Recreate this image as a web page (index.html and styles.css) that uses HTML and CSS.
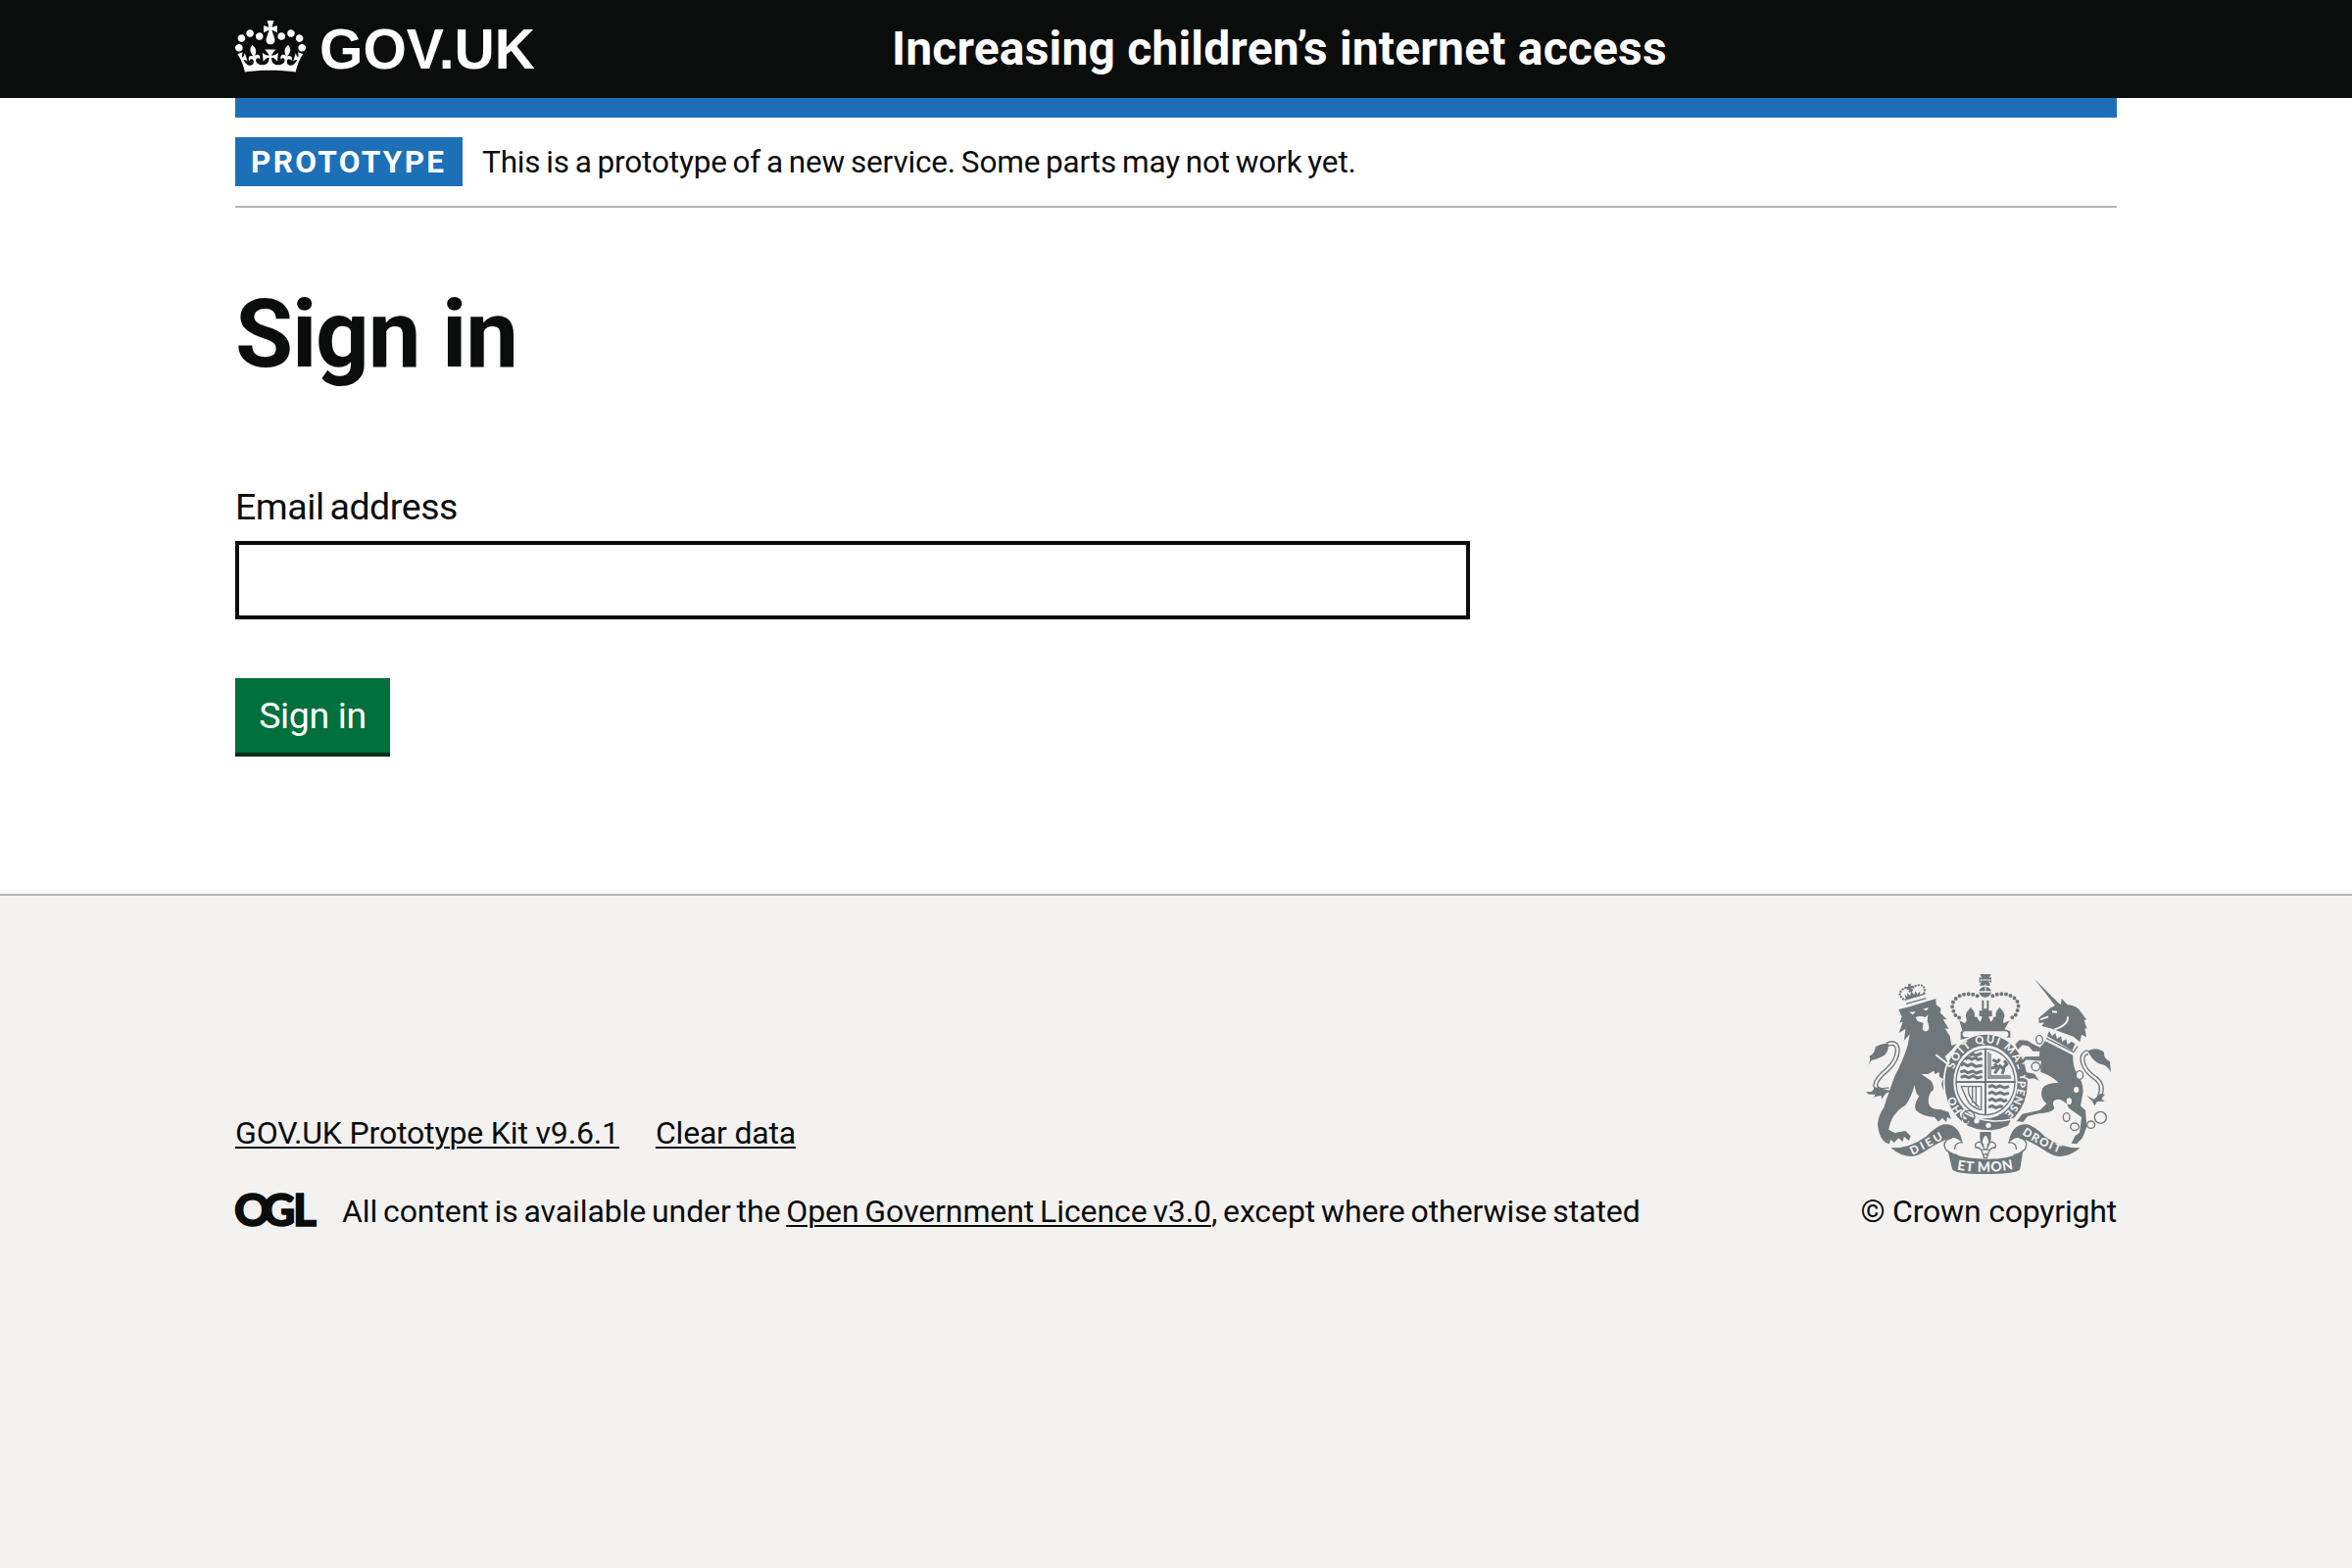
FILE: index.html
```html
<!DOCTYPE html>
<html lang="en">
<head>
<meta charset="utf-8">
<title>Sign in</title>
<link rel="stylesheet" href="styles.css">
</head>
<body>
<header class="header">
  <div class="container header-row">
    <a class="logo" href="#">
      <svg class="crown" viewBox="0 0 132 97" aria-hidden="true"><path fill="currentColor" fill-rule="evenodd" d="M25 30.2c3.5 1.5 7.7-.2 9.1-3.7 1.5-3.6-.2-7.8-3.9-9.2-3.6-1.4-7.6.3-9.1 3.9-1.4 3.5.3 7.5 3.9 9zM9 39.5c3.6 1.5 7.8-.2 9.2-3.7 1.5-3.6-.2-7.8-3.9-9.1-3.6-1.5-7.6.2-9.1 3.8-1.4 3.5.3 7.5 3.8 9zM4.4 57.2c3.5 1.5 7.7-.2 9.1-3.8 1.5-3.6-.2-7.7-3.9-9.1-3.5-1.5-7.6.3-9.1 3.8-1.4 3.5.3 7.6 3.9 9.1zm38.3-21.4c3.5 1.5 7.7-.2 9.1-3.8 1.5-3.6-.2-7.7-3.9-9.1-3.6-1.5-7.6.3-9.1 3.8-1.3 3.6.4 7.7 3.9 9.1zm64.4-5.6c-3.6 1.5-7.8-.2-9.1-3.7-1.5-3.6.2-7.8 3.8-9.2 3.6-1.4 7.7.3 9.2 3.9 1.3 3.5-.4 7.5-3.9 9zm15.9 9.3c-3.6 1.5-7.7-.2-9.1-3.7-1.5-3.6.2-7.8 3.7-9.1 3.6-1.5 7.7.2 9.2 3.8 1.5 3.5-.3 7.5-3.8 9zm4.7 17.7c-3.6 1.5-7.8-.2-9.2-3.8-1.5-3.6.2-7.7 3.9-9.1 3.6-1.5 7.7.3 9.2 3.8 1.3 3.5-.4 7.6-3.9 9.1zM89.3 35.8c-3.6 1.5-7.8-.2-9.2-3.8-1.4-3.6.2-7.7 3.9-9.1 3.6-1.5 7.7.3 9.2 3.8 1.4 3.6-.3 7.7-3.9 9.1zM69.7 17.7l8.9 4.7V9.3l-8.9 2.8c-.2-.3-.5-.6-.9-.9L72.4 0H59.6l3.5 11.2c-.3.3-.6.5-.9.9l-8.8-2.8v13.1l8.8-4.7c.3.3.6.7.9.9l-5 15.4v.1c-.2.8-.4 1.6-.4 2.4 0 4.1 3.1 7.5 7 8.1h.2c.3 0 .7.1 1 .1.4 0 .7 0 1-.1h.2c4-.6 7.1-4.1 7.1-8.1 0-.8-.1-1.7-.4-2.4V34l-5.1-15.4c.4-.2.7-.6 1-.9zM66 92.8c16.9 0 32.8 1.1 47.1 3.2 4-16.9 8.9-26.7 14-33.5l-9.6-3.4c1 4.9 1.1 7.2 0 10.2-1.5-1.4-3-4.3-4.2-8.7L108.6 76c2.8-2 5-3.2 7.5-3.3-4.4 9.4-10 11.9-13.6 11.2-4.3-.8-6.3-4.6-5.6-7.9 1-4.7 5.7-5.9 8-.5 4.3-8.7-3-11.4-7.6-8.8 7.1-7.2 7.9-13.5 2.1-21.1-8 6.1-8.1 12.3-4.5 20.8-4.7-5.4-12.1-2.5-9.5 6.2 3.4-5.2 7.9-2 7.2 3.1-.6 4.3-6.4 7.8-13.5 7.2-10.3-.9-10.9-8-11.2-13.8 2.5-.5 7.1 1.8 11 7.3L80.2 60c-4.1 4.4-8 5.3-12.3 5.4 1.4-4.4 8-11.6 8-11.6H55.5s6.4 7.2 7.9 11.6c-4.2-.1-8-1-12.3-5.4l1.4 16.4c3.9-5.5 8.5-7.7 10.9-7.3-.3 5.8-.9 12.8-11.1 13.8-7.2.6-12.9-2.9-13.5-7.2-.7-5 3.8-8.3 7.1-3.1 2.7-8.7-4.6-11.6-9.4-6.2 3.7-8.5 3.6-14.7-4.6-20.8-5.8 7.6-5 13.9 2.2 21.1-4.7-2.6-11.9.1-7.7 8.8 2.3-5.5 7.1-4.2 8.1.5.7 3.3-1.3 7.1-5.7 7.9-3.5.7-9-1.8-13.5-11.2 2.5.1 4.7 1.3 7.5 3.3l-4.7-15.4c-1.2 4.4-2.7 7.2-4.3 8.7-1.1-3-.9-5.3 0-10.2l-9.5 3.4c5 6.9 9.9 16.7 14 33.5 14.8-2.1 30.8-3.2 47.7-3.2z"/></svg>
      <svg class="wordmark" viewBox="0 0 230 64"><text x="3" y="51" textLength="220" lengthAdjust="spacingAndGlyphs">GOV.UK</text></svg>
    </a>
    <a class="service" href="#">Increasing children’s internet access</a>
  </div>
</header>
<div class="container">
  <div class="blue-bar"></div>
  <div class="phase">
    <strong class="tag">PROTOTYPE</strong>
    <span class="phase-text">This is a prototype of a new service. Some parts may not work yet.</span>
  </div>
  <main class="main">
    <h1 class="title">Sign in</h1>
    <form class="form">
      <label class="label" for="email">Email address</label>
      <input class="input" id="email" type="text">
      <button class="button" type="button">Sign in</button>
    </form>
  </main>
</div>
<footer class="footer">
  <div class="container footer-row">
    <div class="meta">
      <nav class="links">
        <a class="link link-kit" href="#">GOV.UK Prototype Kit v9.6.1</a>
        <a class="link link-clear" href="#">Clear data</a>
      </nav>
      <div class="licence">
        <svg class="ogl" viewBox="0 0 82 36"><text x="-1 28 59" y="33.5">OGL</text></svg>
        <span class="licence-text">All content is available under the <a class="link" href="#">Open Government Licence v3.0</a>, except where otherwise stated</span>
      </div>
    </div>
    <a class="copyright" href="#">
      <svg class="crest" viewBox="66 66 762 624" aria-hidden="true">
        <defs>
          <path id="garter" d="M336 403A104 120 0 0 1 544 403A104 120 0 0 1 440 523"/>
          <path id="pense" d="M438 283A99 118 0 0 1 537 403A99 118 0 0 1 438 521"/>
          <path id="garter-left" d="M374 498A102 119 0 0 1 338 405"/>
          <path id="scroll-left" d="M214 626Q262 604 320 570"/>
          <path id="scroll-right" d="M549 562Q604 598 670 622"/>
          <path id="scroll-mid" d="M350 670Q438 686 526 668"/>
        </defs>
        <!-- lion -->
        <path class="thin" d="M190 151L253 132M195 163L256 146"/>
        <path class="small-pearls" d="M186 148Q168 134 182 121Q197 105 206 125M250 130Q256 104 234 106Q214 107 212 125"/>
        <path d="M201 103l8-2 1 7 7-1 1 7-7 1 3 10-7 2-4-10-6 2-2-7 7-2zM190 132l7 9 3-11 7 9 4-15 8 12 5-13 5 11 9-10-1 15-42 12z"/>
        <path d="M172 180L205 172L286 147L287 165L302 178L299 190L320 211L308 211L326 240L314 238L329 262L334 290L350 286L335 304L314 325L345 384L341 410L346 425L334 414L331 429L320 416L309 428L303 408L309 393L297 386L296 372L283 378L280 368L262 378L242 378L262 392Q280 400 279 425Q260 440 264 468Q270 488 300 486L325 494L333 516L321 510L318 525L306 512L294 524L282 510Q246 508 225 489Q216 476 235 445Q224 440 221 411Q209 455 193 473Q148 500 142 548L160 558L193 552L209 568L204 582L189 570L184 585L172 574L158 588L147 578L144 592Q112 584 108 530Q110 505 127 480Q140 440 160 385Q186 335 200 290L206 256L189 275L193 240L173 252L185 218L175 221L182 202Z"/>
        <path class="cut" d="M204 188l20-1-8 9zM246 180l18-7-6 11zM224 204q14-6 30 0l8-8-2 20q8 20 3 28-11 8-18-3l3-19-18-6z"/>
        <path class="cutline" d="M286 319L326 350Q345 370 348 400"/>
        <path class="tail" d="M136 288Q165 275 169 302Q169 335 137 365Q105 390 101 412Q104 433 143 425"/>
        <path class="tailcut" d="M136 288Q165 275 169 302Q169 335 137 365Q105 390 101 412Q104 433 143 425"/>
        <path d="M72 360Q90 338 83 323Q100 315 101 295Q115 285 140 284Q144 305 129 320Q105 333 90 335ZM72 433L90 432L100 418L150 430Q130 434 121 455L118 443L96 449L101 440L81 440Z"/>
        <!-- royal crown -->
        <path d="M421 72h34l-6 12 7-3v18l-8-6 5 14h-33l6-14-7 6V81l8 4zM418 124a20 19 0 0 1 38 0zM418 128h38q-6 15-19 15t-19-15zM427 152h6v32h-6zM442 152h6v32h-6z"/>
        <path class="cutthin" d="M421 90h34M438 103v24"/>
        <path class="pearls" d="M413 139Q385 126 359 139Q325 158 342 189Q345 205 366 207M460 139Q489 126 517 139Q550 158 533 189Q530 205 510 207"/>
        <path d="M358 214l16 8q9-4 4-20-2-12 15-28 16 16 11 29 10-3 12 9l7 6 5-16-9-1v-17h11l-2-6h20l-2 6h12v17l-10 1 6 16 6-6q2-12 11-10-6-12 10-28 17 16 15 28-6 16-2 20l18-8-20 34q-58-11-124 0z"/>
        <path d="M362 248q18-9 28-9 50-5 98 0 12 1 26 8v20q-76-17-152 6z"/>
        <rect class="cut" x="368" y="247" width="140" height="18" rx="9"/>
        <!-- garter and shield -->
        <ellipse class="halo" cx="440" cy="404" rx="129" ry="149"/>
        <ellipse class="cut" cx="438" cy="402" rx="98" ry="112"/>
        <ellipse class="thin" cx="438" cy="402" rx="90" ry="101"/>
        <path class="bar" d="M438 299V505M347 402H530"/>
        <path class="beasts" d="M376 333l10-6 9 6 13-5 7 6 13-3M390 322l8-6 11 5 18-7M362 352l9-6 13 7 11-6 14 8 19-4M361 372l12-4 11 6 15-5 10 6 19-6M362 388l12-4 13 5 13-6 12 7 16-4M447 418l11-5 12 6 13-5 12 6 15-4M447 438l11-5 12 6 13-5 12 6 15-4M447 459l11-5 12 6 13-5 12 6 9-4M447 480l11-5 12 6 13-5 8 3"/>
        <path class="thin" d="M447 310v80h70M453 315v69h62M364 416h61v71q-29-5-43-30zM386 418q-6 30 34 62M398 418v48M409 418v58"/>
        <path class="beasts" d="M460 334l14 7 8-9M466 376l12-17-13-12M479 350l15 13-5 15M493 358l11-11-9-10M456 360l14-3"/>
        <text class="motto"><textPath href="#garter" startOffset="40" textLength="308">SOIT QUI MAL Y</textPath></text>
        <text class="motto"><textPath href="#pense" startOffset="168" textLength="112">PENSE</textPath></text>
        <text class="motto"><textPath href="#garter-left" startOffset="10">HO</textPath></text>
        <path class="halo" d="M367 493Q438 535 519 516L509 538Q440 570 369 532Z"/>
        <path class="cutline" d="M374 487q-18 11-8 24M365 526q14 11 23-2M380 515q-14-4-10-15"/>
        <circle class="thin" cx="386" cy="509" r="19"/>
        <circle class="cut" cx="411" cy="521" r="8"/><circle class="cut" cx="447" cy="535" r="8"/>
        <!-- unicorn -->
        <path d="M588 87L664 163L669 164L671 146L688 165Q720 168 731 190L747 211L740 213L749 240L742 238L747 265L732 257L727 280L707 263L637 238L610 231L618 220L602 222L601 206L636 176L651 168Z"/>
        <path class="cutline" d="M690 202Q692 228 649 241M606 211l24-9M642 187l15 1"/>
        <path d="M621 277L706 320Q704 355 720 380Q744 415 734 447L729 475L744 489L748 540L735 573L717 592L701 590L712 568L726 557L732 510L693 482Q690 465 664 455Q636 455 649 481Q646 496 600 499L567 507L553 525L533 522L551 500L605 488L625 469Q602 449 612 422Q620 405 662 404Q635 380 607 372Q605 352 609 338L563 334L549 348L561 372L588 377L602 398L586 391L570 393L546 365L538 348L560 325L603 324L604 308L583 308L571 293L552 289L537 303L529 287L542 274L566 275L583 286L605 296Z"/>
        <path class="cut" d="M624 267L633 243 708 284 724 300 708 322z"/>
        <path class="thin" d="M624 268L708 311L720 293"/>
        <path d="M627 262l6-16 9 16 10-9 5 17 12-8 4 17 12-8 4 17 11-9 12 5-8 22z"/>
        <path class="tail" d="M752 311Q730 315 736 342Q743 370 775 391Q804 413 786 449"/>
        <path class="tailcut" d="M752 311Q730 315 736 342Q743 370 775 391Q804 413 786 449"/>
        <path d="M751 307Q780 292 801 311Q799 329 819 340L822 373Q811 349 789 347Q766 340 751 307ZM747 443L770 455L790 438L804 440L793 453L803 461L780 462L772 475L764 460Z"/>
        <g class="bead"><ellipse cx="603" cy="272" rx="10" ry="13"/><ellipse cx="592" cy="355" rx="13" ry="13"/><ellipse cx="726" cy="381" rx="11" ry="13"/><ellipse cx="686" cy="510" rx="10" ry="13"/><ellipse cx="711" cy="539" rx="13" ry="11"/><ellipse cx="761" cy="533" rx="12" ry="11"/><circle cx="790" cy="511" r="18"/></g>
        <ellipse class="cut" cx="694" cy="461" rx="8" ry="10"/><ellipse class="cut" cx="716" cy="426" rx="8" ry="9"/>
        <!-- scroll -->
        <path class="thin" d="M336 573q-24 4-24 24 3 22 40 29M368 588q-26-2-24 21M541 573q24 4 22 24-3 22-39 29M508 588q26-2 24 21"/>
        <path d="M148 604Q205 606 256 569Q289 537 309 532Q357 526 368 590Q350 568 329 574Q303 582 248 617Q201 648 148 604Z"/>
        <path d="M728 604Q670 605 620 569Q587 537 567 532Q519 526 508 590Q526 568 547 574Q573 582 628 617Q675 648 728 604Z"/>
        <path d="M322 610Q350 637 438 638T554 608L544 668Q536 684 438 684T336 668Z"/>
        <text class="scroll-text"><textPath href="#scroll-left" textLength="108">DIEU</textPath></text>
        <text class="scroll-text"><textPath href="#scroll-right" textLength="128">DROIT</textPath></text>
        <text class="scroll-text mid"><textPath href="#scroll-mid" textLength="174">ET MON</textPath></text>
        <path d="M421 555h34v20q-1 12-10 16h-14q-9-4-10-16z"/>
        <path class="lily" d="M438 562q-20 22-6 40-1-18-16-16-14 5-7 18 9-4 17 8l5 14h14l5-14q8-12 17-8 7-13-7-18-15-2-16 16 14-18-6-40zM428 609h20"/><circle class="lily" cx="438" cy="629" r="6"/>
      </svg>
      <span class="copyright-text">© Crown copyright</span>
    </a>
  </div>
</footer>
</body>
</html>
```
FILE: styles.css
```css
* { box-sizing: border-box; }

body {
  margin: 0;
  min-height: 1600px;
  display: flex;
  flex-direction: column;
  background: #fff;
  color: #0b0c0c;
  font-family: Roboto, "Noto Sans", sans-serif;
  font-size: 32px;
}

a { color: inherit; text-decoration: none; }

.container { width: 1920px; margin: 0 auto; }

.header { height: 100px; background: #0b0c0c; color: #fff; }
.header-row { display: flex; height: 100px; align-items: flex-start; }
.logo { display: flex; width: 670px; }
.crown { width: 72px; height: 53px; margin-top: 21px; }
.wordmark { width: 230px; height: 64px; margin: 19px 0 0 11px; overflow: visible; }
.wordmark text { font: bold 58px "Liberation Sans", sans-serif; fill: #fff; }
.service {
  margin-top: 20px;
  font-size: 48px;
  font-weight: 700;
  line-height: 60px;
  letter-spacing: .17px;
  white-space: nowrap;
}

.blue-bar { height: 20px; background: #1d70b8; }

.phase {
  display: flex;
  align-items: center;
  height: 92px;
  border-bottom: 2px solid #b1b4b6;
}
.tag {
  width: 232px;
  height: 50px;
  padding-left: 16px;
  background: #1d70b8;
  color: #fff;
  font-weight: 700;
  font-size: 31.5px;
  line-height: 51px;
  letter-spacing: 2.35px;
  white-space: nowrap;
}
.phase-text {
  margin-left: 20px;
  font-size: 31.5px;
  letter-spacing: -.16px;
  word-spacing: -1.8px;
  white-space: nowrap;
}

.main { padding-top: 80px; height: 700px; }
.title {
  margin: 0;
  font-size: 96px;
  font-weight: 700;
  line-height: 98px;
  letter-spacing: -1.2px;
}
.form { display: flex; flex-direction: column; align-items: flex-start; margin-top: 102px; }
.label {
  margin-bottom: 10px;
  font-size: 37.5px;
  line-height: 50px;
  letter-spacing: -.45px;
  word-spacing: -3px;
}
.input { width: 1260px; height: 80px; border: 4px solid #0b0c0c; padding: 10px; font: inherit; }
.button {
  width: 158px;
  height: 76px;
  margin-top: 60px;
  padding: 0;
  border: 0;
  background: #00703c;
  box-shadow: 0 4px 0 #002d18;
  color: #fff;
  font-family: inherit;
  font-size: 37.5px;
  line-height: 77px;
  letter-spacing: -.4px;
}

.footer { flex: 1; border-top: 2px solid #b1b4b6; background: #f3f2f1; }
.footer-row { display: flex; justify-content: space-between; align-items: flex-end; padding-top: 78px; }
.links { display: flex; gap: 37px; }
.link { text-decoration: underline; text-decoration-thickness: 2px; text-underline-offset: 3px; }
.link-kit { letter-spacing: -.15px; }
.link-clear { letter-spacing: -.2px; }
.links, .licence { line-height: 40px; white-space: nowrap; }
.licence { display: flex; margin-top: 40px; }
.licence-text { letter-spacing: -.09px; word-spacing: -2px; }
.ogl { width: 82px; height: 36px; margin: 1px 27px 0 0; overflow: visible; }
.ogl text { font: 900 46px Lato, sans-serif; fill: #0b0c0c; stroke: #0b0c0c; stroke-width: 1.5px; }

.copyright { display: flex; flex-direction: column; align-items: flex-end; }
.crest { width: 254px; height: 208px; margin-right: 4px; fill: #6f777b; }
.copyright-text { margin-top: 16px; line-height: 40px; letter-spacing: -.2px; white-space: nowrap; }

.crest .thin { fill: none; stroke: #6f777b; stroke-width: 4; }
.crest .cut { fill: #f3f2f1; }
.crest .cutline { fill: none; stroke: #f3f2f1; stroke-width: 6; }
.crest .cutthin { fill: none; stroke: #f3f2f1; stroke-width: 3; }
.crest .tail { fill: none; stroke: #6f777b; stroke-width: 15; }
.crest .tailcut { fill: none; stroke: #f3f2f1; stroke-width: 7; }
.crest .pearls { fill: none; stroke: #6f777b; stroke-width: 12; stroke-linecap: round; stroke-dasharray: 0 14; }
.crest .small-pearls { fill: none; stroke: #6f777b; stroke-width: 7; stroke-linecap: round; stroke-dasharray: 0 9; }
.crest .halo { stroke: #f3f2f1; stroke-width: 5; }
.crest .bar { fill: none; stroke: #6f777b; stroke-width: 6; }
.crest .beasts { fill: none; stroke: #6f777b; stroke-width: 9; stroke-linejoin: round; }
.crest .bead { fill: #f3f2f1; stroke: #6f777b; stroke-width: 4; }
.crest .lily { fill: #f3f2f1; stroke: #6f777b; stroke-width: 4; }
.crest .motto { font: 900 33px Lato, sans-serif; fill: #f3f2f1; }
.crest .scroll-text { font: 900 35px Lato, sans-serif; fill: #f3f2f1; }
.crest .mid { font-size: 42px; }
```
